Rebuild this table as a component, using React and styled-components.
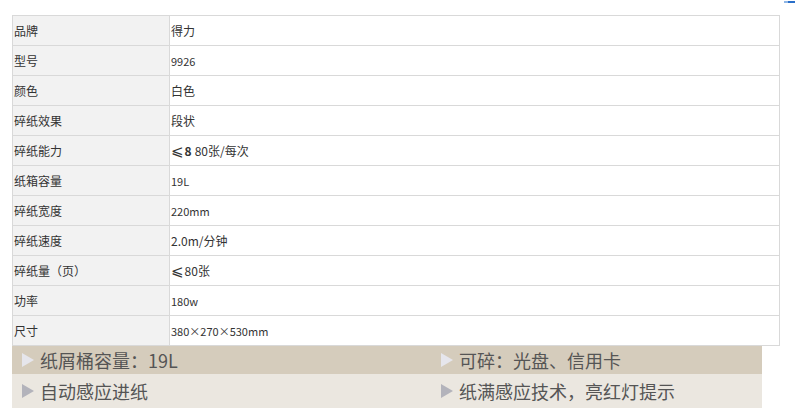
import React from "react";
import styled, { createGlobalStyle } from "styled-components";

const Global = createGlobalStyle`
  html, body { margin: 0; padding: 0; background: #fff; }
  body { font-family: "Noto Sans CJK SC", "Liberation Sans", sans-serif; }
`;

const Page = styled.div`
  position: relative;
  width: 795px;
  height: 418px;
  padding: 15px 0 0 12px;
  box-sizing: border-box;
  overflow: hidden;
`;

const CornerLink = styled.span`
  position: absolute;
  top: 1px;
  right: 0;
  width: 11px;
  height: 2px;
  background: linear-gradient(90deg, #8fb6e6 0 35%, #2a6fc9 35% 100%);
`;

const Table = styled.table`
  width: 768px;
  border-collapse: collapse;
  table-layout: fixed;
  font-size: 12px;
  color: #333;
`;

const Row = styled.tr`
  height: 30px;
`;

const Label = styled.td`
  width: 157px;
  box-sizing: border-box;
  background: #f2f2f2;
  border: 1px solid #d9d9d9;
  padding: 0 0 0 1px;
  line-height: 16px;
  vertical-align: middle;
`;

const Value = styled.td`
  background: #fff;
  border: 1px solid #d9d9d9;
  padding: 0 0 0 1px;
  line-height: 16px;
  vertical-align: middle;
  font-size: ${(p) => (p.$small ? "11px" : "12px")};
`;

const Le = styled.span`
  font-family: "DejaVu Sans", "Noto Sans CJK SC", sans-serif;
  font-size: 15px;
  line-height: 16px;
  margin-right: 1px;
`;

const Bold = styled.b`
  font-weight: 700;
  margin-right: 3px;
`;

const Banner = styled.div`
  display: grid;
  grid-template-columns: 419px 331px;
  width: 750px;
`;

const Cell = styled.div`
  display: flex;
  align-items: center;
  gap: 6px;
  height: ${(p) => (p.$tall ? "34px" : "28px")};
  padding-left: 10px;
  background: ${(p) => (p.$tall ? "#ebe7e0" : "#d5ccbc")};
  font-size: 18px;
  color: #555;
  white-space: nowrap;
`;

const Arrow = styled.span`
  width: 0;
  height: 0;
  border-top: 7.5px solid transparent;
  border-bottom: 7.5px solid transparent;
  border-left: 12px solid ${(p) => p.$color};
  flex: none;
`;

const specs = [
  ["品牌", "得力"],
  ["型号", "9926", true],
  ["颜色", "白色"],
  ["碎纸效果", "段状"],
  ["碎纸能力", "cap"],
  ["纸箱容量", "19L", true],
  ["碎纸宽度", "220mm", true],
  ["碎纸速度", "2.0m/分钟"],
  ["碎纸量（页）", "le80"],
  ["功率", "180w", true],
  ["尺寸", "380×270×530mm", true],
];

const features = [
  ["纸屑桶容量：19L", "可碎：光盘、信用卡"],
  ["自动感应进纸", "纸满感应技术，亮红灯提示"],
];

function renderValue(v) {
  if (v === "cap")
    return (
      <>
        <Le>⩽</Le>
        <Bold>8</Bold>80张/每次
      </>
    );
  if (v === "le80")
    return (
      <>
        <Le>⩽</Le>80张
      </>
    );
  return v;
}

export default function App() {
  return (
    <Page>
      <Global />
      <CornerLink />
      <Table>
        <tbody>
          {specs.map(([k, v, small]) => (
            <Row key={k}>
              <Label>{k}</Label>
              <Value $small={small}>{renderValue(v)}</Value>
            </Row>
          ))}
        </tbody>
      </Table>
      <Banner>
        {features.map((pair, i) =>
          pair.map((t) => (
            <Cell key={t} $tall={i === 1}>
              <Arrow $color={i === 0 ? "#e6e6ec" : "#b3b3bb"} />
              {t}
            </Cell>
          ))
        )}
      </Banner>
    </Page>
  );
}
